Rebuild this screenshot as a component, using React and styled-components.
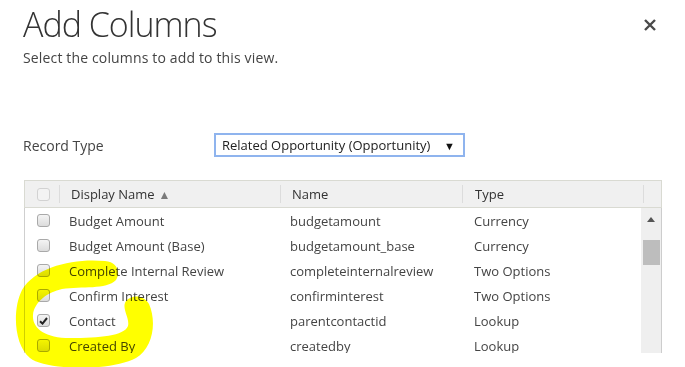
import React from "react";
import styled, { createGlobalStyle } from "styled-components";

const GlobalStyle = createGlobalStyle`
  html, body {
    margin: 0;
    padding: 0;
    background: #ffffff;
  }
  body {
    font-family: "Open Sans", "Liberation Sans", sans-serif;
    color: #444444;
    overflow: hidden;
  }
`;

const Page = styled.div`
  position: relative;
  width: 685px;
  height: 367px;
  padding: 2px 24px 0 23px;
  box-sizing: border-box;
  overflow: hidden;
`;

const TopBar = styled.div`
  display: flex;
  justify-content: space-between;
  align-items: flex-start;
`;

const Title = styled.h1`
  margin: 0;
  font-size: 34px;
  font-weight: 300;
  line-height: 44px;
  letter-spacing: -1px;
  color: #333333;
`;

const CloseButton = styled.button`
  border: 0;
  background: none;
  padding: 0;
  margin: 16px 4px 0 0;
  width: 14px;
  height: 14px;
  display: flex;
  cursor: pointer;
`;

const Subtitle = styled.p`
  margin: 2px 0 0;
  font-size: 14px;
  line-height: 20px;
  letter-spacing: 0.15px;
  color: #444444;
`;

const FieldRow = styled.div`
  display: flex;
  align-items: center;
  margin-top: 65px;
`;

const FieldLabel = styled.label`
  width: 191px;
  font-size: 14px;
  color: #444444;
`;

const Select = styled.div`
  width: 251px;
  height: 24px;
  box-sizing: border-box;
  border: 2px solid #8fb4ee;
  display: flex;
  align-items: center;
  justify-content: space-between;
  padding: 0 8px 0 6px;
  font-size: 13px;
  color: #222222;
`;

const Arrow = styled.span`
  font-size: 11px;
  color: #111111;
`;

const Grid = styled.div`
  margin-top: 23px;
  margin-left: 1px;
  width: 638px;
`;

const HeaderRow = styled.div`
  display: grid;
  grid-template-columns: 34px 221px 182px 181px 1fr;
  height: 26px;
  align-items: center;
  background: #f0f0f0;
  border: 1px solid #d9dad2;
  font-size: 13px;
  color: #333333;
`;

const HeaderCell = styled.div`
  height: 18px;
  display: flex;
  align-items: center;
  padding-left: ${(p) => p.$pad || 11}px;
  border-left: ${(p) => (p.$first ? "none" : "1px solid #dcdcdc")};
`;

const SortArrow = styled.span`
  font-size: 12px;
  color: #7a7a7a;
  margin-left: 4px;
  margin-top: 1px;
`;

const Body = styled.div`
  display: flex;
  height: 145px;
  border-left: 1px solid #cfcfcf;
  overflow: hidden;
`;

const Rows = styled.div`
  flex: 1;
`;

const Row = styled.div`
  display: grid;
  grid-template-columns: 33px 221px 182px 1fr;
  height: 25px;
  align-items: center;
  font-size: 13px;
  color: #444444;
`;

const Cell = styled.div`
  padding-left: ${(p) => p.$pad || 11}px;
  white-space: nowrap;
`;

const Check = styled.span`
  width: 13px;
  height: 13px;
  box-sizing: border-box;
  border-radius: 3px;
  border: 1px solid ${(p) => (p.$muted ? "#d2d2d2" : "#a9a9a9")};
  background: ${(p) =>
    p.$muted ? "#f3f3f3" : "linear-gradient(#f4f4f4, #dcdcdc)"};
  display: flex;
  align-items: center;
  justify-content: center;
`;

const Scrollbar = styled.div`
  width: 20px;
  background: #efefef;
  border-right: 1px solid #cdcdcd;
  display: flex;
  flex-direction: column;
  align-items: center;
`;

const ScrollUp = styled.div`
  margin-top: 9px;
  width: 0;
  height: 0;
  border-left: 4px solid transparent;
  border-right: 4px solid transparent;
  border-bottom: 5px solid #555555;
`;

const Thumb = styled.div`
  margin-top: 18px;
  width: 17px;
  height: 25px;
  background: #bdbdbd;
`;

const Highlight = styled.svg`
  position: absolute;
  left: 0;
  top: 0;
  mix-blend-mode: multiply;
  pointer-events: none;
`;

const columns = [
  { label: "Budget Amount", name: "budgetamount", type: "Currency" },
  { label: "Budget Amount (Base)", name: "budgetamount_base", type: "Currency" },
  { label: "Complete Internal Review", name: "completeinternalreview", type: "Two Options" },
  { label: "Confirm Interest", name: "confirminterest", type: "Two Options" },
  { label: "Contact", name: "parentcontactid", type: "Lookup", checked: true },
  { label: "Created By", name: "createdby", type: "Lookup" },
];

const Checkbox = ({ checked, muted }) => (
  <Check $muted={muted}>
    {checked && (
      <svg width="9" height="8" viewBox="0 0 9 8">
        <path d="M1 4.2 L3.5 6.6 L8 1" fill="none" stroke="#222" strokeWidth="2" />
      </svg>
    )}
  </Check>
);

const App = () => {
  return (
    <Page>
      <GlobalStyle />
      <TopBar>
        <Title>Add Columns</Title>
        <CloseButton aria-label="Close">
          <svg width="14" height="14" viewBox="0 0 14 14">
            <path d="M2 2 L12 12 M12 2 L2 12" stroke="#4a4a4a" strokeWidth="2.4" />
          </svg>
        </CloseButton>
      </TopBar>
      <Subtitle>Select the columns to add to this view.</Subtitle>

      <FieldRow>
        <FieldLabel>Record Type</FieldLabel>
        <Select>
          Related Opportunity (Opportunity)
          <Arrow>▼</Arrow>
        </Select>
      </FieldRow>

      <Grid>
        <HeaderRow>
          <HeaderCell $first $pad={12}>
            <Checkbox muted />
          </HeaderCell>
          <HeaderCell>
            Display Name<SortArrow>▲</SortArrow>
          </HeaderCell>
          <HeaderCell>Name</HeaderCell>
          <HeaderCell $pad={12}>Type</HeaderCell>
          <HeaderCell />
        </HeaderRow>
        <Body>
          <Rows>
            {columns.map((c) => (
              <Row key={c.name}>
                <Cell $pad={12}>
                  <Checkbox checked={c.checked} />
                </Cell>
                <Cell>{c.label}</Cell>
                <Cell>{c.name}</Cell>
                <Cell $pad={13}>{c.type}</Cell>
              </Row>
            ))}
          </Rows>
          <Scrollbar>
            <ScrollUp />
            <Thumb />
          </Scrollbar>
        </Body>
      </Grid>

      <Highlight width="685" height="367" viewBox="0 0 685 367">
        <path
          d="M105 261 C75 258 36 266 22 290 C12 310 14 345 30 358 C45 370 110 372 136 358 C153 348 157 322 149 304 C144 295 132 294 126 301 C121 308 130 318 128 326 C124 336 100 338 70 338 C45 338 32 328 33 315 C34 302 48 292 62 289 C82 286 106 290 116 280 C121 272 117 262 105 261 Z"
          fill="#ffff00"
        />
      </Highlight>
    </Page>
  );
};

export default App;
